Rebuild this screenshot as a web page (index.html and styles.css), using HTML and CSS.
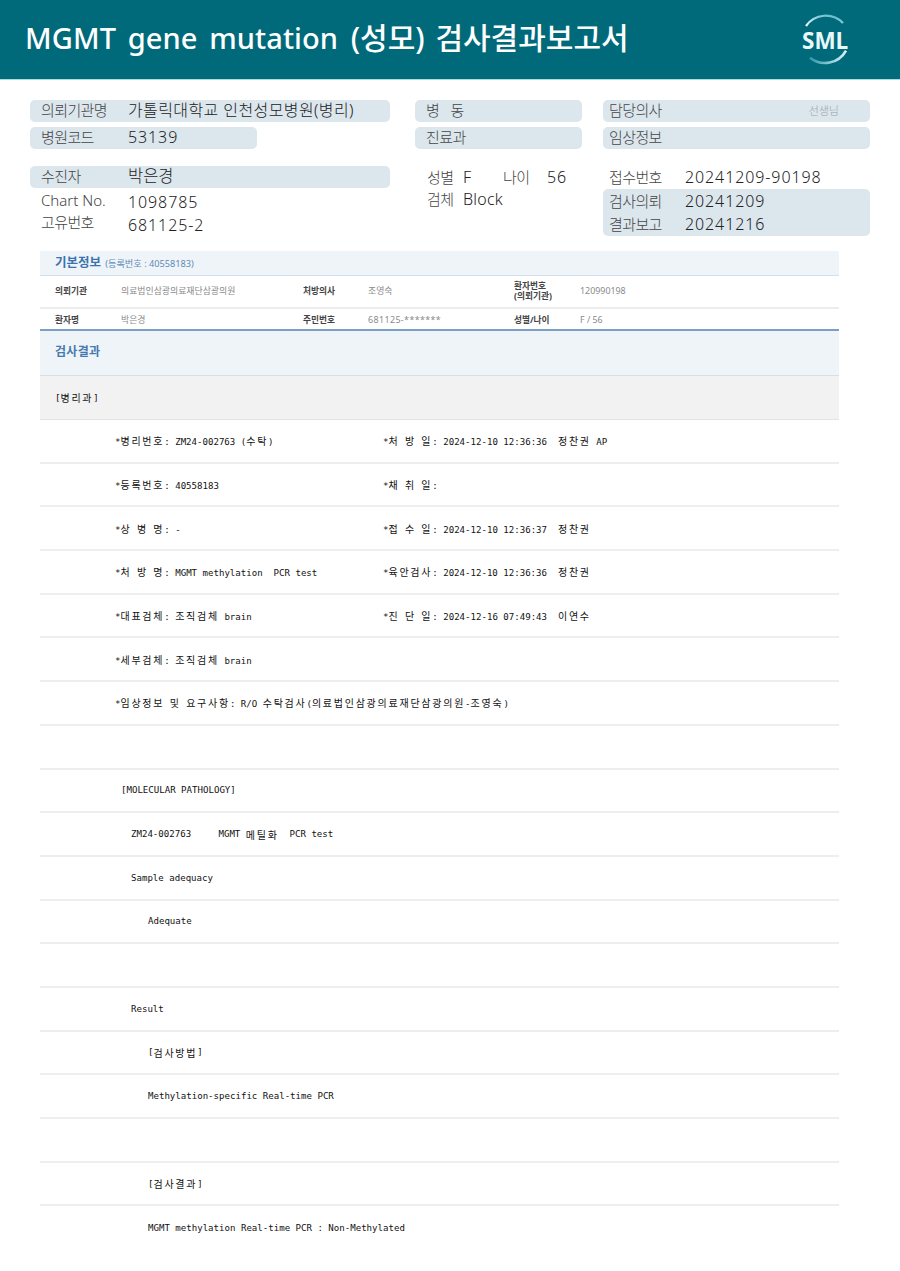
FILE: index.html
```html
<!DOCTYPE html>
<html lang="ko">
<head>
<meta charset="utf-8">
<title>MGMT gene mutation 검사결과보고서</title>
<link rel="stylesheet" href="styles.css">
</head>
<body>
<header class="banner">
  <h1 class="title"><span class="title-latin">MGMT gene mutation</span> <span class="title-ko">(성모) 검사결과보고서</span></h1>
  <svg class="logo" width="50" height="52" viewBox="0 0 50 52" aria-label="SML">
    <defs>
      <linearGradient id="arcTop" x1="0" y1="1" x2="1" y2="0"><stop offset="0" stop-color="#eefbfc"/><stop offset="1" stop-color="#4fb3c4"/></linearGradient>
      <linearGradient id="arcBottom" x1="0" y1="0" x2="1" y2="0"><stop offset="0" stop-color="#2f98aa"/><stop offset="1" stop-color="#d5f3f7"/></linearGradient>
    </defs>
    <path d="M5 12 A24 24 0 0 1 42 9" fill="none" stroke="url(#arcTop)" stroke-width="2.2"/>
    <path d="M9 43.7 A24 24 0 0 0 45 36.6" fill="none" stroke="url(#arcBottom)" stroke-width="2.6"/>
    <text x="1" y="35" class="logo-text">SML</text>
  </svg>
</header>

<section class="summary">
  <div class="col col-a">
    <div class="pill"><span class="label">의뢰기관명</span><span class="value value-ko">가톨릭대학교 인천성모병원(병리)</span></div>
    <div class="pill pill-short"><span class="label">병원코드</span><span class="value">53139</span></div>
    <div class="pill pill-third"><span class="label">수진자</span><span class="value value-ko value-name">박은경</span></div>
    <div class="plain plain-chart"><span class="label">Chart No.</span><span class="value">1098785</span></div>
    <div class="plain plain-id"><span class="label">고유번호</span><span class="value">681125-2</span></div>
  </div>
  <div class="col col-b">
    <div class="pill"><span class="label label-ward">병 동</span></div>
    <div class="pill"><span class="label">진료과</span></div>
    <div class="plain plain-sex"><span class="label label-sm">성별</span><span class="value value-f">F</span><span class="label label-age">나이</span><span class="value">56</span></div>
    <div class="plain plain-spec"><span class="label label-sm">검체</span><span class="value value-block">Block</span></div>
  </div>
  <div class="col col-c">
    <div class="pill pill-doc"><span class="label">담당의사</span><span class="suffix">선생님</span></div>
    <div class="pill pill-doc"><span class="label">임상정보</span></div>
    <div class="plain plain-recv"><span class="label label-c">접수번호</span><span class="value">20241209-90198</span></div>
    <div class="dates">
      <div class="date-row"><span class="label label-c">검사의뢰</span><span class="value">20241209</span></div>
      <div class="date-row"><span class="label label-c">결과보고</span><span class="value">20241216</span></div>
    </div>
  </div>
</section>

<section class="sheet">
  <div class="band-info"><strong class="band-title">기본정보</strong> <span class="reg">(등록번호 : 40558183)</span></div>
  <div class="meta meta-tall">
    <b class="m1">의뢰기관</b><span class="m2">의료법인삼광의료재단삼광의원</span>
    <b class="m3">처방의사</b><span class="m4">조영숙</span>
    <b class="m5">환자번호<br>(의뢰기관)</b><span class="m6">120990198</span>
  </div>
  <div class="meta meta-short">
    <b class="m1">환자명</b><span class="m2">박은경</span>
    <b class="m3">주민번호</b><span class="m4 mask">681125-*******</span>
    <b class="m5">성별/나이</b><span class="m6">F / 56</span>
  </div>
  <div class="band-result"><strong class="result-title">검사결과</strong></div>
  <div class="band-dept">[<span class="ko">병리과</span>]</div>

  <div class="row two"><span class="l">*<span class="ko">병리번호</span>: ZM24-002763 (<span class="ko">수탁</span>)</span><span class="l">*<span class="ko">처</span> <span class="ko">방</span> <span class="ko">일</span>: 2024-12-10 12:36:36  <span class="ko">정찬권</span> AP</span></div>
  <div class="row two"><span class="l">*<span class="ko">등록번호</span>: 40558183</span><span class="l">*<span class="ko">채</span> <span class="ko">취</span> <span class="ko">일</span>:</span></div>
  <div class="row two"><span class="l">*<span class="ko">상</span> <span class="ko">병</span> <span class="ko">명</span>: -</span><span class="l">*<span class="ko">접</span> <span class="ko">수</span> <span class="ko">일</span>: 2024-12-10 12:36:37  <span class="ko">정찬권</span></span></div>
  <div class="row two"><span class="l">*<span class="ko">처</span> <span class="ko">방</span> <span class="ko">명</span>: MGMT methylation  PCR test</span><span class="l">*<span class="ko">육안검사</span>: 2024-12-10 12:36:36  <span class="ko">정찬권</span></span></div>
  <div class="row two"><span class="l">*<span class="ko">대표검체</span>: <span class="ko">조직검체</span> brain</span><span class="l">*<span class="ko">진</span> <span class="ko">단</span> <span class="ko">일</span>: 2024-12-16 07:49:43  <span class="ko">이연수</span></span></div>
  <div class="row two"><span class="l">*<span class="ko">세부검체</span>: <span class="ko">조직검체</span> brain</span></div>
  <div class="row two"><span class="l">*<span class="ko">임상정보</span> <span class="ko">및</span> <span class="ko">요구사항</span>: R/O <span class="ko">수탁검사</span>(<span class="ko">의료법인삼광의료재단삼광의원</span>-<span class="ko">조영숙</span>)</span></div>
  <div class="row"></div>
  <div class="row in-1">[MOLECULAR PATHOLOGY]</div>
  <div class="row in-2">ZM24-002763     MGMT <span class="ko">메틸화</span>  PCR test</div>
  <div class="row in-2">Sample adequacy</div>
  <div class="row in-3">Adequate</div>
  <div class="row"></div>
  <div class="row in-2">Result</div>
  <div class="row in-3">[<span class="ko">검사방법</span>]</div>
  <div class="row in-3">Methylation-specific Real-time PCR</div>
  <div class="row"></div>
  <div class="row in-3">[<span class="ko">검사결과</span>]</div>
  <div class="row row-last in-3">MGMT methylation Real-time PCR : Non-Methylated</div>
</section>
</body>
</html>
```

FILE: styles.css
```css
* { box-sizing: border-box; }
html, body { margin: 0; padding: 0; }
body {
  width: 900px;
  height: 1271px;
  overflow: hidden;
  background: #fff;
  color: #222;
  font-family: "Noto Sans", "Noto Sans CJK KR", sans-serif;
}

.banner {
  height: 80px;
  background: #006a7a;
  border-bottom: 1px solid #a9dde5;
  display: flex;
  align-items: center;
  justify-content: space-between;
  padding: 0 49px 2px 25px;
}
.title {
  margin: 0 0 2px;
  color: #fff;
  font-size: 29px;
  font-weight: 500;
  line-height: 1;
  letter-spacing: 0;
  white-space: nowrap;
}
.title-latin { word-spacing: 4px; letter-spacing: 0.1px; }
.title-ko { font-size: 30px; margin-left: 5px; word-spacing: 3px; }
.logo { display: block; margin-top: 2px; }
.logo-text {
  font-family: "Open Sans", sans-serif;
  font-size: 22.5px;
  font-weight: 700;
  fill: #e9f9fb;
}

.summary {
  display: flex;
  padding: 20px 30px 0;
  height: 171px;
  font-size: 16px;
  line-height: 22px;
  font-weight: 300;
}
.col { display: flex; flex-direction: column; }
.col-a { width: 360px; margin-right: 25px; }
.col-b { width: 167px; margin-right: 21px; }
.col-c { width: 267px; }

.pill {
  height: 22px;
  background: #dce6ed;
  border-radius: 5px;
  display: flex;
  align-items: center;
  padding: 0 0 2px 11px;
  margin-bottom: 5px;
  flex: none;
}
.pill-short { width: 227px; }
.pill-third { margin-top: 12px; margin-bottom: 0; }
.pill-doc { padding-left: 6px; justify-content: space-between; padding-right: 31px; }
.label { color: #444; display: inline-block; font-size: 15px; letter-spacing: -0.6px; }
.label-ward { word-spacing: 8px; }
.value { color: #222; letter-spacing: 0.9px; }
.value-ko { letter-spacing: 0.4px; }
.col-a .label { width: 87px; }
.value-name { font-size: 16.5px; letter-spacing: 0; }
.plain { display: flex; align-items: center; padding-left: 11px; height: 22px; flex: none; }
.plain-chart { margin-top: 3px; }
.plain-chart .label { position: relative; top: -2px; letter-spacing: 0; }
.plain-id { margin-top: 1px; }
.plain-id .label { position: relative; top: -3px; }
.plain-sex { margin-top: 12px; padding-left: 12px; }
.plain-spec { padding-left: 12px; }
.label-sm { width: 36px; }
.value-f { width: 40px; }
.label-age { width: 44px; }
.value-block { letter-spacing: 0.2px; }
.suffix { font-size: 11px; color: #9aa3a8; padding-top: 2px; }
.plain-recv { margin-top: 12px; padding-left: 6px; }
.label-c { width: 76px; }
.dates {
  margin-top: 1px;
  height: 47px;
  background: #dce6ed;
  border-radius: 5px;
  padding: 0 0 0 6px;
}
.date-row { display: flex; align-items: center; height: 23px; }

.sheet { margin: 0 61px 0 40px; width: 799px; }
.band-info {
  height: 25px;
  background: #eff4f9;
  border-bottom: 1px solid #d5dfe9;
  padding-left: 15px;
  line-height: 20px;
  white-space: nowrap;
}
.band-title { font-size: 12.5px; font-weight: 700; color: #3a73ad; }
.reg { font-size: 9.2px; color: #5d8bb8; }

.meta {
  display: grid;
  grid-template-columns: 66px 182px 65px 146px 66px 1fr;
  align-items: center;
  padding-left: 15px;
  font-size: 8.9px;
  line-height: 10px;
  color: #8a8a8a;
  background: #fff;
}
.meta b { color: #444; font-weight: 700; font-size: 8.7px; }
.mask { letter-spacing: 0.4px; }
.meta-tall { height: 33px; border-bottom: 2px solid #ececec; padding-bottom: 1px; }
.meta-short { height: 22px; border-bottom: 2px solid #7b9fc4; padding-top: 1px; }

.band-result {
  height: 45px;
  background: #eff4f9;
  border-bottom: 1px solid #d5dfe9;
  padding-left: 15px;
  line-height: 39px;
}
.result-title { font-size: 12px; font-weight: 700; color: #4679ad; letter-spacing: 0.3px; }
.band-dept {
  height: 44px;
  background: #f2f2f2;
  border-bottom: 1px solid #e3e3e3;
  padding-left: 15px;
  display: flex;
  align-items: center;
  white-space: pre;
  font-family: "DejaVu Sans Mono", "Noto Sans CJK KR", monospace;
  font-size: 9.08px;
  color: #111;
}

.row {
  height: 43.7px;
  border-bottom: 2px solid #eeeeee;
  display: flex;
  align-items: center;
  white-space: pre;
  font-family: "DejaVu Sans Mono", "Noto Sans CJK KR", monospace;
  font-size: 9.08px;
  color: #111;
}
.row-last { border-bottom: 0; }
.ko { font-size: 10px; letter-spacing: 1.74px; }
.two { padding-left: 75px; }
.two .l:first-child:not(:last-child) { width: 268px; }
.in-1 { padding-left: 81px; }
.in-2 { padding-left: 91px; }
.in-3 { padding-left: 108px; }
```
